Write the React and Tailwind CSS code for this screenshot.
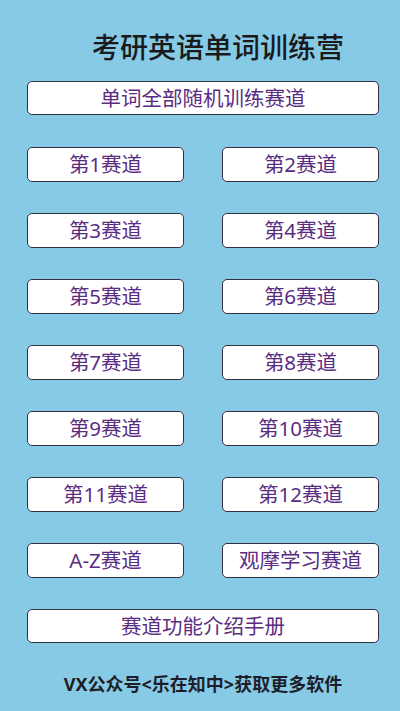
const tracks = [
  "第1赛道",
  "第2赛道",
  "第3赛道",
  "第4赛道",
  "第5赛道",
  "第6赛道",
  "第7赛道",
  "第8赛道",
  "第9赛道",
  "第10赛道",
  "第11赛道",
  "第12赛道",
  "A-Z赛道",
  "观摩学习赛道",
];

const TrackButton = ({ label, wide }) => (
  <button
    className={`${wide ? "h-[34px]" : "h-[35px]"} w-full bg-white border-[1.5px] border-[#352f40] rounded-[5px] flex items-center justify-center text-[20.5px] leading-none text-[#5a2d82]`}
  >
    {label}
  </button>
);

const App = () => {
  return (
    <div
      className="w-[400px] h-[711px] bg-[#87cae6] flex flex-col pl-[27px] pr-[21px]"
      style={{ fontFamily: '"Noto Sans", "Noto Sans CJK SC", sans-serif' }}
    >
      <h1 className="pt-[30px] mb-[17px] text-[28px] leading-[34px] font-medium text-[#1a1a1a] pl-[65px]">
        考研英语单词训练营
      </h1>

      <TrackButton label="单词全部随机训练赛道" wide />

      <div className="grid grid-cols-2 gap-x-[38px] gap-y-[31px] mt-[32px]">
        {tracks.map((t) => (
          <TrackButton key={t} label={t} />
        ))}
      </div>

      <div className="mt-[31px]">
        <TrackButton label="赛道功能介绍手册" wide />
      </div>

      <p className="mt-[31px] text-center text-[18px] leading-[20px] font-bold text-[#1e1e28]">
        VX公众号&lt;乐在知中&gt;获取更多软件
      </p>
    </div>
  );
};

export default App;
